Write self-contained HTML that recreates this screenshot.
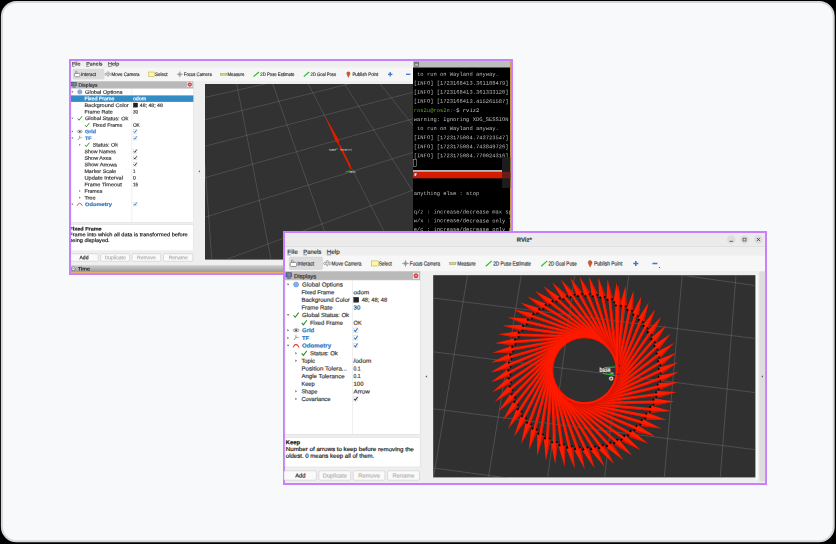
<!DOCTYPE html>
<html><head><meta charset="utf-8"><title>RViz</title>
<style>
html,body{margin:0;padding:0;background:#000;overflow:hidden}
svg{display:block}
text{font-family:"Liberation Sans",sans-serif;white-space:pre}
.m{font-family:"Liberation Mono",monospace}
.b{font-weight:bold}
</style></head><body>
<svg width="836" height="544" viewBox="0 0 836 544">
<rect x="0" y="0" width="836" height="544" fill="#000"/>
<rect x="1.9" y="1.9" width="831.8" height="539.4" rx="14.5" ry="14.5" fill="#f8f9fb" stroke="#d4d7da" stroke-width="2"/>
<g id="w1">
<rect x="69.00" y="59.00" width="444.00" height="216.00" fill="#c880ff" />
<rect x="71.00" y="61.00" width="440.00" height="212.00" fill="#efefef" />
<clipPath id="c1"><rect x="71" y="61" width="440" height="212"/></clipPath>
<filter id="b1" x="0" y="0" width="100%" height="100%"><feGaussianBlur stdDeviation="0.35"/></filter>
<g clip-path="url(#c1)"><g filter="url(#b1)">
<rect x="71.00" y="67.50" width="342.00" height="13.50" fill="#f6f6f6" />
<rect x="72.60" y="68.80" width="31.80" height="10.70" fill="#dcdcdc" rx="1.2"/>
<rect x="71.00" y="81.30" width="122.40" height="7.40" fill="#b9b9b9" />
<rect x="71.00" y="88.70" width="122.40" height="133.50" fill="#ffffff" stroke="#d6d6d6" stroke-width="0.4"/>
<line x1="131.80" y1="88.70" x2="131.80" y2="222.20" stroke="#e4e4e4" stroke-width="0.6" />
<rect x="71.00" y="95.40" width="122.40" height="6.50" fill="#308cc6" />
<rect x="71.00" y="224.80" width="122.40" height="26.10" fill="#ffffff" stroke="#d6d6d6" stroke-width="0.4"/>
<rect x="70.00" y="253.70" width="28.20" height="7.60" fill="#fafafa" rx="1" stroke="#c9c9c9" stroke-width="0.6"/>
<rect x="100.70" y="253.70" width="28.90" height="7.60" fill="#fafafa" rx="1" stroke="#c9c9c9" stroke-width="0.6"/>
<rect x="132.10" y="253.70" width="28.70" height="7.60" fill="#fafafa" rx="1" stroke="#c9c9c9" stroke-width="0.6"/>
<rect x="163.50" y="253.70" width="29.30" height="7.60" fill="#fafafa" rx="1" stroke="#c9c9c9" stroke-width="0.6"/>
<linearGradient id="tg" x1="0" y1="0" x2="0" y2="1"><stop offset="0" stop-color="#cfcfcf"/><stop offset="1" stop-color="#979797"/></linearGradient>
<rect x="71.00" y="265.20" width="440.00" height="7.00" fill="url(#tg)" />
<rect x="71.00" y="271.70" width="440.00" height="1.00" fill="#e8a33a" />
<rect x="205.00" y="84.00" width="208.00" height="175.60" fill="#303030" />
<rect x="413.00" y="61.00" width="97.50" height="212.00" fill="#000000" />
<rect x="413.00" y="61.00" width="97.50" height="6.50" fill="#bdbdbd" />
<rect x="510.30" y="61.00" width="0.80" height="212.00" fill="#e8a33a" />
<rect x="414.8" y="62.2" width="3.6" height="4" fill="none" stroke="#444" stroke-width="0.6"/>
<line x1="414.80" y1="63.30" x2="418.40" y2="63.30" stroke="#444" stroke-width="0.6" />
<text x="413.80" y="75.63" font-size="5.45" fill="#bdbdbd" textLength="85.02" lengthAdjust="spacingAndGlyphs" class="m" transform="rotate(0.05 413.8 75.6)" > to run on Wayland anyway.</text>
<text x="413.80" y="84.70" font-size="5.45" fill="#bdbdbd" textLength="94.83" lengthAdjust="spacingAndGlyphs" class="m" transform="rotate(0.05 413.8 84.7)" >[INFO] [1723168413.361188479]</text>
<text x="413.80" y="93.77" font-size="5.45" fill="#bdbdbd" textLength="94.83" lengthAdjust="spacingAndGlyphs" class="m" transform="rotate(0.05 413.8 93.8)" >[INFO] [1723168413.361333120]</text>
<text x="413.80" y="102.84" font-size="5.45" fill="#bdbdbd" textLength="94.83" lengthAdjust="spacingAndGlyphs" class="m" transform="rotate(0.05 413.8 102.8)" >[INFO] [1723168413.415261587]</text>
<text x="413.80" y="111.91" font-size="5.45" fill="#5fa81e" textLength="35.97" lengthAdjust="spacingAndGlyphs" class="m" transform="rotate(0.05 413.8 111.9)" >ros2u@ros2n</text>
<text x="449.77" y="111.91" font-size="5.45" fill="#3d6fb5" textLength="6.54" lengthAdjust="spacingAndGlyphs" class="m" transform="rotate(0.05 449.8 111.9)" >:~</text>
<text x="456.31" y="111.91" font-size="5.45" fill="#d0d0d0" textLength="22.89" lengthAdjust="spacingAndGlyphs" class="m" transform="rotate(0.05 456.3 111.9)" >$ rviz2</text>
<text x="413.80" y="120.98" font-size="5.45" fill="#bdbdbd" textLength="94.83" lengthAdjust="spacingAndGlyphs" class="m" transform="rotate(0.05 413.8 121.0)" >warning: Ignoring XDG_SESSION</text>
<text x="413.80" y="130.05" font-size="5.45" fill="#bdbdbd" textLength="85.02" lengthAdjust="spacingAndGlyphs" class="m" transform="rotate(0.05 413.8 130.1)" > to run on Wayland anyway.</text>
<text x="413.80" y="139.12" font-size="5.45" fill="#bdbdbd" textLength="94.83" lengthAdjust="spacingAndGlyphs" class="m" transform="rotate(0.05 413.8 139.1)" >[INFO] [1723175084.743723547]</text>
<text x="413.80" y="148.19" font-size="5.45" fill="#bdbdbd" textLength="94.83" lengthAdjust="spacingAndGlyphs" class="m" transform="rotate(0.05 413.8 148.2)" >[INFO] [1723175084.743849726]</text>
<text x="413.80" y="157.26" font-size="5.45" fill="#bdbdbd" textLength="94.83" lengthAdjust="spacingAndGlyphs" class="m" transform="rotate(0.05 413.8 157.3)" >[INFO] [1723175084.770024316]</text>
<rect x="413.6" y="159.5" width="3" height="7" fill="none" stroke="#bbb" stroke-width="0.5"/>
<rect x="502.00" y="157.00" width="8.30" height="31.00" fill="#1f1f1f" />
<rect x="413.00" y="170.20" width="89.00" height="1.60" fill="#e6e6e6" />
<rect x="413.00" y="171.80" width="89.00" height="6.50" fill="#d61a00" />
<rect x="502.00" y="171.80" width="8.30" height="6.50" fill="#6a1c16" />
<rect x="414.50" y="173.30" width="2.20" height="2.60" fill="#e8e8f8" />
<rect x="416.00" y="174.60" width="1.60" height="1.80" fill="#3355cc" />
<text x="413.80" y="195.03" font-size="5.45" fill="#bdbdbd" textLength="65.40" lengthAdjust="spacingAndGlyphs" class="m" transform="rotate(0.05 413.8 195.0)" >anything else : stop</text>
<text x="413.80" y="213.43" font-size="5.45" fill="#bdbdbd" textLength="98.10" lengthAdjust="spacingAndGlyphs" class="m" transform="rotate(0.05 413.8 213.4)" >q/z : increase/decrease max sp</text>
<text x="413.80" y="222.33" font-size="5.45" fill="#bdbdbd" textLength="98.10" lengthAdjust="spacingAndGlyphs" class="m" transform="rotate(0.05 413.8 222.3)" >w/x : increase/decrease only l</text>
<text x="413.80" y="230.93" font-size="5.45" fill="#bdbdbd" textLength="98.10" lengthAdjust="spacingAndGlyphs" class="m" transform="rotate(0.05 413.8 230.9)" >e/c : increase/decrease only a</text>
<clipPath id="v1"><rect x="205" y="84" width="208" height="175.6"/></clipPath>
<g clip-path="url(#v1)" stroke="#787878" stroke-width="0.42" fill="none">
<line x1="196.1" y1="99.4" x2="273.4" y2="82.1"/>
<line x1="183.4" y1="125.1" x2="370.6" y2="78.6"/>
<line x1="173.9" y1="154.3" x2="443.6" y2="84.3"/>
<line x1="174.2" y1="186.4" x2="443.6" y2="110.1"/>
<line x1="174.2" y1="226.8" x2="443.7" y2="142.9"/>
<line x1="198.4" y1="269.9" x2="440.5" y2="179.9"/>
<line x1="204.9" y1="163.9" x2="212.7" y2="271.6"/>
<line x1="231.6" y1="57.8" x2="276.1" y2="285.5"/>
<line x1="265.2" y1="62.4" x2="331.3" y2="250.7"/>
<line x1="297.0" y1="62.0" x2="395.6" y2="253.7"/>
<line x1="334.5" y1="68.1" x2="422.8" y2="207.0"/>
<line x1="375.5" y1="78.0" x2="417.3" y2="130.8"/>
</g>
<path d="M324.8,115.6 L339.3,140.8 L338.55,141.2 L352.15,168.4 L350.45,169.2 L336.85,142.0 L336.1,142.4 Z" fill="#dc1e00"/>
<line x1="339.60" y1="143.00" x2="340.20" y2="146.00" stroke="#1a1ad0" stroke-width="0.9" />
<line x1="351.30" y1="165.20" x2="351.80" y2="168.20" stroke="#1a1ad0" stroke-width="0.9" />
<line x1="332.00" y1="150.00" x2="338.00" y2="148.80" stroke="#19c019" stroke-width="0.9" />
<line x1="345.50" y1="172.00" x2="350.50" y2="170.60" stroke="#19c019" stroke-width="0.9" />
<text x="329.30" y="150.52" font-size="2.6" fill="#ffffff" textLength="6.50" lengthAdjust="spacingAndGlyphs" transform="rotate(0.05 329.3 150.5)" >base_f</text>
<text x="340.50" y="150.52" font-size="2.6" fill="#e8e8e8" textLength="11.00" lengthAdjust="spacingAndGlyphs" transform="rotate(0.05 340.5 150.5)" >footprint</text>
<text x="349.50" y="172.72" font-size="2.6" fill="#ffffff" textLength="6.00" lengthAdjust="spacingAndGlyphs" transform="rotate(0.05 349.5 172.7)" >odom</text>
<text x="71.90" y="65.49" font-size="5.05" fill="#3a3a3a" textLength="8.60" lengthAdjust="spacingAndGlyphs" stroke="#3a3a3a" stroke-width="0.18" transform="rotate(0.05 71.9 65.5)" >File</text>
<line x1="71.90" y1="66.40" x2="74.60" y2="66.40" stroke="#3a3a3a" stroke-width="0.5" />
<text x="86.20" y="65.49" font-size="5.05" fill="#3a3a3a" textLength="16.30" lengthAdjust="spacingAndGlyphs" stroke="#3a3a3a" stroke-width="0.18" transform="rotate(0.05 86.2 65.5)" >Panels</text>
<line x1="86.20" y1="66.40" x2="89.30" y2="66.40" stroke="#3a3a3a" stroke-width="0.5" />
<text x="108.00" y="65.49" font-size="5.05" fill="#3a3a3a" textLength="11.20" lengthAdjust="spacingAndGlyphs" stroke="#3a3a3a" stroke-width="0.18" transform="rotate(0.05 108.0 65.5)" >Help</text>
<line x1="108.00" y1="66.40" x2="111.60" y2="66.40" stroke="#3a3a3a" stroke-width="0.5" />
<text x="81.00" y="76.09" font-size="5.05" fill="#3a3a3a" textLength="15.00" lengthAdjust="spacingAndGlyphs" stroke="#3a3a3a" stroke-width="0.18" transform="rotate(0.05 81.0 76.1)" >Interact</text>
<text x="111.60" y="76.09" font-size="5.05" fill="#3a3a3a" textLength="28.00" lengthAdjust="spacingAndGlyphs" stroke="#3a3a3a" stroke-width="0.18" transform="rotate(0.05 111.6 76.1)" >Move Camera</text>
<text x="154.90" y="76.09" font-size="5.05" fill="#3a3a3a" textLength="12.70" lengthAdjust="spacingAndGlyphs" stroke="#3a3a3a" stroke-width="0.18" transform="rotate(0.05 154.9 76.1)" >Select</text>
<text x="183.80" y="76.09" font-size="5.05" fill="#3a3a3a" textLength="28.00" lengthAdjust="spacingAndGlyphs" stroke="#3a3a3a" stroke-width="0.18" transform="rotate(0.05 183.8 76.1)" >Focus Camera</text>
<text x="227.40" y="76.09" font-size="5.05" fill="#3a3a3a" textLength="17.00" lengthAdjust="spacingAndGlyphs" stroke="#3a3a3a" stroke-width="0.18" transform="rotate(0.05 227.4 76.1)" >Measure</text>
<text x="260.30" y="76.09" font-size="5.05" fill="#3a3a3a" textLength="34.20" lengthAdjust="spacingAndGlyphs" stroke="#3a3a3a" stroke-width="0.18" transform="rotate(0.05 260.3 76.1)" >2D Pose Estimate</text>
<text x="310.60" y="76.09" font-size="5.05" fill="#3a3a3a" textLength="25.60" lengthAdjust="spacingAndGlyphs" stroke="#3a3a3a" stroke-width="0.18" transform="rotate(0.05 310.6 76.1)" >2D Goal Pose</text>
<text x="352.40" y="76.09" font-size="5.05" fill="#3a3a3a" textLength="25.90" lengthAdjust="spacingAndGlyphs" stroke="#3a3a3a" stroke-width="0.18" transform="rotate(0.05 352.4 76.1)" >Publish Point</text>
<rect x="75.6" y="71.3" width="1.3" height="3" rx="0.5" fill="#fdfdfd" stroke="#444" stroke-width="0.45"/>
<rect x="74.5" y="73.4" width="5.4" height="3.3" rx="1" fill="#fdfdfd" stroke="#444" stroke-width="0.5"/>
<path d="M108,71.3 l1.3,1.5 h-0.8 v1.1 h1.6 v-0.8 l1.4,1.2 l-1.4,1.2 v-0.8 h-1.6 v1.6 h-1 v-1.6 h-1.6 v0.8 l-1.4,-1.2 l1.4,-1.2 v0.8 h1.6 v-1.1 h-0.8 z" fill="#f2f2f2" stroke="#666" stroke-width="0.4"/>
<rect x="148.70" y="72.00" width="5.90" height="4.40" fill="#fdf6a5" stroke="#b3a53a" stroke-width="0.45"/>
<circle cx="179.8" cy="74.3" r="1.5" fill="#d8d8d8" stroke="#777" stroke-width="0.4"/>
<line x1="176.80" y1="74.30" x2="182.80" y2="74.30" stroke="#777" stroke-width="0.5" />
<line x1="179.80" y1="71.30" x2="179.80" y2="77.30" stroke="#777" stroke-width="0.5" />
<rect x="220.20" y="73.40" width="6.70" height="1.90" fill="#d9cf86" stroke="#8f8a4d" stroke-width="0.35"/>
<line x1="253.60" y1="76.60" x2="258.90" y2="72.00" stroke="#25b525" stroke-width="1.1" />
<line x1="303.80" y1="76.60" x2="309.10" y2="72.00" stroke="#25b525" stroke-width="1.1" />
<path d="M348.4,77.4 l-1.5,-3.2 a1.7,1.7 0 1 1 3,0 z" fill="#d4552a" stroke="#8a2f14" stroke-width="0.3"/>
<line x1="388.00" y1="74.30" x2="392.40" y2="74.30" stroke="#3f76c8" stroke-width="1.3" />
<line x1="390.20" y1="72.10" x2="390.20" y2="76.50" stroke="#3f76c8" stroke-width="1.3" />
<line x1="406.00" y1="74.30" x2="410.40" y2="74.30" stroke="#3f76c8" stroke-width="1.3" />
<text x="78.60" y="86.79" font-size="5.05" fill="#333" textLength="19.00" lengthAdjust="spacingAndGlyphs" stroke="#333" stroke-width="0.18" transform="rotate(0.05 78.6 86.8)" >Displays</text>
<rect x="71.60" y="82.30" width="4.80" height="3.60" fill="#5a7dd6" stroke="#333" stroke-width="0.4"/>
<rect x="72.60" y="82.90" width="1.30" height="2.40" fill="#d24a4a" />
<rect x="73.90" y="82.90" width="1.20" height="2.40" fill="#58b558" />
<line x1="72.60" y1="87.00" x2="75.60" y2="87.00" stroke="#333" stroke-width="0.6" />
<rect x="187.30" y="82.00" width="5.00" height="5.00" fill="#f4f4f4" />
<circle cx="189.8" cy="84.5" r="1.9" fill="#e23b3b" stroke="#b02020" stroke-width="0.3"/>
<line x1="188.90" y1="84.50" x2="190.70" y2="84.50" stroke="#fff" stroke-width="0.6" />
<path d="M71.30,91.30 h2.20 l-1.10,1.40 z" fill="#666"/>
<circle cx="79.80" cy="91.90" r="2.20" fill="#7aa6ea" stroke="#5a86cc" stroke-width="0.40"/>
<ellipse cx="79.80" cy="91.90" rx="0.90" ry="2.20" fill="none" stroke="#b8d0f4" stroke-width="0.30"/>
<text x="85.00" y="93.69" font-size="5.05" fill="#3a3a3a" textLength="37.50" lengthAdjust="spacingAndGlyphs" stroke="#3a3a3a" stroke-width="0.18" transform="rotate(0.05 85.0 93.7)" >Global Options</text>
<text x="84.40" y="100.30" font-size="5.05" fill="#ffffff" textLength="30.20" lengthAdjust="spacingAndGlyphs" stroke="#ffffff" stroke-width="0.18" transform="rotate(0.05 84.4 100.3)" >Fixed Frame</text>
<text x="132.90" y="100.30" font-size="5.05" fill="#ffffff" textLength="13.30" lengthAdjust="spacingAndGlyphs" stroke="#ffffff" stroke-width="0.18" transform="rotate(0.05 132.9 100.3)" >odom</text>
<text x="84.40" y="106.90" font-size="5.05" fill="#3a3a3a" textLength="44.30" lengthAdjust="spacingAndGlyphs" stroke="#3a3a3a" stroke-width="0.18" transform="rotate(0.05 84.4 106.9)" >Background Color</text>
<rect x="133.30" y="103.01" width="4.40" height="4.20" fill="#222" stroke="#111" stroke-width="0.3"/>
<text x="139.80" y="106.90" font-size="5.05" fill="#3a3a3a" textLength="23.10" lengthAdjust="spacingAndGlyphs" stroke="#3a3a3a" stroke-width="0.18" transform="rotate(0.05 139.8 106.9)" >48; 48; 48</text>
<text x="84.40" y="113.51" font-size="5.05" fill="#3a3a3a" textLength="28.40" lengthAdjust="spacingAndGlyphs" stroke="#3a3a3a" stroke-width="0.18" transform="rotate(0.05 84.4 113.5)" >Frame Rate</text>
<text x="132.90" y="113.51" font-size="5.05" fill="#3a3a3a" textLength="5.20" lengthAdjust="spacingAndGlyphs" stroke="#3a3a3a" stroke-width="0.18" transform="rotate(0.05 132.9 113.5)" >30</text>
<path d="M71.30,117.72 h2.20 l-1.10,1.40 z" fill="#666"/>
<path d="M77.60,118.52 l1.40,1.70 l3.00,-4.00" fill="none" stroke="#1f8f1f" stroke-width="0.90"/>
<text x="85.00" y="120.12" font-size="5.05" fill="#3a3a3a" textLength="43.20" lengthAdjust="spacingAndGlyphs" stroke="#3a3a3a" stroke-width="0.18" transform="rotate(0.05 85.0 120.1)" >Global Status: Ok</text>
<path d="M85.00,125.13 l1.40,1.70 l3.00,-4.00" fill="none" stroke="#1f8f1f" stroke-width="0.90"/>
<text x="92.70" y="126.72" font-size="5.05" fill="#3a3a3a" textLength="29.80" lengthAdjust="spacingAndGlyphs" stroke="#3a3a3a" stroke-width="0.18" transform="rotate(0.05 92.7 126.7)" >Fixed Frame</text>
<text x="132.90" y="126.72" font-size="5.05" fill="#3a3a3a" textLength="6.90" lengthAdjust="spacingAndGlyphs" stroke="#3a3a3a" stroke-width="0.18" transform="rotate(0.05 132.9 126.7)" >OK</text>
<path d="M71.80,130.44 v2.20 l1.40,-1.10 z" fill="#666"/>
<ellipse cx="79.80" cy="131.54" rx="2.50" ry="1.40" fill="#e8e8e8" stroke="#555" stroke-width="0.45"/>
<circle cx="79.80" cy="131.54" r="0.90" fill="#444"/>
<text x="85.00" y="133.33" font-size="5.05" fill="#2d78c4" textLength="11.00" lengthAdjust="spacingAndGlyphs" font-weight="bold" stroke="#2d78c4" stroke-width="0.18" transform="rotate(0.05 85.0 133.3)" >Grid</text>
<rect x="133.30" y="129.64" width="3.70" height="3.70" fill="#ffffff" stroke="#d2d6dc" stroke-width="0.50"/>
<path d="M133.90,131.44 l0.90,1.20 l1.90,-2.80" fill="none" stroke="#2f70c4" stroke-width="0.90"/>
<path d="M71.30,137.54 h2.20 l-1.10,1.40 z" fill="#666"/>
<line x1="78.00" y1="139.94" x2="79.60" y2="137.94" stroke="#3a58c8" stroke-width="0.6" />
<line x1="79.60" y1="137.94" x2="79.60" y2="135.74" stroke="#c83a3a" stroke-width="0.6" />
<line x1="79.60" y1="137.94" x2="82.00" y2="137.54" stroke="#3aa83a" stroke-width="0.6" />
<text x="85.00" y="139.93" font-size="5.05" fill="#2d78c4" textLength="6.70" lengthAdjust="spacingAndGlyphs" font-weight="bold" stroke="#2d78c4" stroke-width="0.18" transform="rotate(0.05 85.0 139.9)" >TF</text>
<rect x="133.30" y="136.24" width="3.70" height="3.70" fill="#ffffff" stroke="#d2d6dc" stroke-width="0.50"/>
<path d="M133.90,138.04 l0.90,1.20 l1.90,-2.80" fill="none" stroke="#2f70c4" stroke-width="0.90"/>
<path d="M79.20,143.65 v2.20 l1.40,-1.10 z" fill="#666"/>
<path d="M85.00,144.95 l1.40,1.70 l3.00,-4.00" fill="none" stroke="#1f8f1f" stroke-width="0.90"/>
<text x="92.70" y="146.54" font-size="5.05" fill="#3a3a3a" textLength="25.20" lengthAdjust="spacingAndGlyphs" stroke="#3a3a3a" stroke-width="0.18" transform="rotate(0.05 92.7 146.5)" >Status: Ok</text>
<text x="84.40" y="153.15" font-size="5.05" fill="#3a3a3a" textLength="31.40" lengthAdjust="spacingAndGlyphs" stroke="#3a3a3a" stroke-width="0.18" transform="rotate(0.05 84.4 153.1)" >Show Names</text>
<rect x="133.30" y="149.45" width="3.70" height="3.70" fill="#ffffff" stroke="#d2d6dc" stroke-width="0.50"/>
<path d="M133.90,151.25 l0.90,1.20 l1.90,-2.80" fill="none" stroke="#2a2a2a" stroke-width="0.90"/>
<text x="84.40" y="159.75" font-size="5.05" fill="#3a3a3a" textLength="27.10" lengthAdjust="spacingAndGlyphs" stroke="#3a3a3a" stroke-width="0.18" transform="rotate(0.05 84.4 159.8)" >Show Axes</text>
<rect x="133.30" y="156.06" width="3.70" height="3.70" fill="#ffffff" stroke="#d2d6dc" stroke-width="0.50"/>
<path d="M133.90,157.86 l0.90,1.20 l1.90,-2.80" fill="none" stroke="#2a2a2a" stroke-width="0.90"/>
<text x="84.40" y="166.36" font-size="5.05" fill="#3a3a3a" textLength="32.70" lengthAdjust="spacingAndGlyphs" stroke="#3a3a3a" stroke-width="0.18" transform="rotate(0.05 84.4 166.4)" >Show Arrows</text>
<rect x="133.30" y="162.67" width="3.70" height="3.70" fill="#ffffff" stroke="#d2d6dc" stroke-width="0.50"/>
<path d="M133.90,164.47 l0.90,1.20 l1.90,-2.80" fill="none" stroke="#2a2a2a" stroke-width="0.90"/>
<text x="84.40" y="172.96" font-size="5.05" fill="#3a3a3a" textLength="31.70" lengthAdjust="spacingAndGlyphs" stroke="#3a3a3a" stroke-width="0.18" transform="rotate(0.05 84.4 173.0)" >Marker Scale</text>
<text x="132.90" y="172.96" font-size="5.05" fill="#3a3a3a" textLength="2.40" lengthAdjust="spacingAndGlyphs" stroke="#3a3a3a" stroke-width="0.18" transform="rotate(0.05 132.9 173.0)" >1</text>
<text x="84.40" y="179.57" font-size="5.05" fill="#3a3a3a" textLength="38.60" lengthAdjust="spacingAndGlyphs" stroke="#3a3a3a" stroke-width="0.18" transform="rotate(0.05 84.4 179.6)" >Update Interval</text>
<text x="132.90" y="179.57" font-size="5.05" fill="#3a3a3a" textLength="2.80" lengthAdjust="spacingAndGlyphs" stroke="#3a3a3a" stroke-width="0.18" transform="rotate(0.05 132.9 179.6)" >0</text>
<text x="84.40" y="186.18" font-size="5.05" fill="#3a3a3a" textLength="37.40" lengthAdjust="spacingAndGlyphs" stroke="#3a3a3a" stroke-width="0.18" transform="rotate(0.05 84.4 186.2)" >Frame Timeout</text>
<text x="132.90" y="186.18" font-size="5.05" fill="#3a3a3a" textLength="5.20" lengthAdjust="spacingAndGlyphs" stroke="#3a3a3a" stroke-width="0.18" transform="rotate(0.05 132.9 186.2)" >15</text>
<path d="M79.20,189.89 v2.20 l1.40,-1.10 z" fill="#666"/>
<text x="84.40" y="192.78" font-size="5.05" fill="#3a3a3a" textLength="18.00" lengthAdjust="spacingAndGlyphs" stroke="#3a3a3a" stroke-width="0.18" transform="rotate(0.05 84.4 192.8)" >Frames</text>
<path d="M79.20,196.50 v2.20 l1.40,-1.10 z" fill="#666"/>
<text x="84.40" y="199.39" font-size="5.05" fill="#3a3a3a" textLength="11.10" lengthAdjust="spacingAndGlyphs" stroke="#3a3a3a" stroke-width="0.18" transform="rotate(0.05 84.4 199.4)" >Tree</text>
<path d="M71.80,203.10 v2.20 l1.40,-1.10 z" fill="#666"/>
<path d="M77.20,205.80 q2.40,-5.20 5.20,0" fill="none" stroke="#d8452a" stroke-width="0.90"/>
<text x="85.00" y="205.99" font-size="5.05" fill="#2d78c4" textLength="27.00" lengthAdjust="spacingAndGlyphs" font-weight="bold" stroke="#2d78c4" stroke-width="0.18" transform="rotate(0.05 85.0 206.0)" >Odometry</text>
<rect x="133.30" y="202.30" width="3.70" height="3.70" fill="#ffffff" stroke="#d2d6dc" stroke-width="0.50"/>
<path d="M133.90,204.10 l0.90,1.20 l1.90,-2.80" fill="none" stroke="#2f70c4" stroke-width="0.90"/>
<text x="69.40" y="230.49" font-size="5.05" fill="#111" textLength="32.20" lengthAdjust="spacingAndGlyphs" font-weight="bold" stroke="#111" stroke-width="0.18" transform="rotate(0.05 69.4 230.5)" >Fixed Frame</text>
<text x="69.20" y="236.19" font-size="5.05" fill="#222" textLength="118.60" lengthAdjust="spacingAndGlyphs" stroke="#222" stroke-width="0.18" transform="rotate(0.05 69.2 236.2)" >Frame into which all data is transformed before</text>
<text x="69.20" y="242.09" font-size="5.05" fill="#222" textLength="40.50" lengthAdjust="spacingAndGlyphs" stroke="#222" stroke-width="0.18" transform="rotate(0.05 69.2 242.1)" >being displayed.</text>
<text x="84.00" y="259.29" font-size="5.05" fill="#222" text-anchor="middle" stroke="#222" stroke-width="0.18" transform="rotate(0.05 84.0 259.3)" >Add</text>
<text x="115.20" y="259.29" font-size="5.05" fill="#b4b4b4" text-anchor="middle" stroke="#b4b4b4" stroke-width="0.18" transform="rotate(0.05 115.2 259.3)" >Duplicate</text>
<text x="146.50" y="259.29" font-size="5.05" fill="#b4b4b4" text-anchor="middle" stroke="#b4b4b4" stroke-width="0.18" transform="rotate(0.05 146.5 259.3)" >Remove</text>
<text x="178.20" y="259.29" font-size="5.05" fill="#b4b4b4" text-anchor="middle" stroke="#b4b4b4" stroke-width="0.18" transform="rotate(0.05 178.2 259.3)" >Rename</text>
<circle cx="73.3" cy="268.7" r="1.9" fill="#f4f4f4" stroke="#444" stroke-width="0.5"/>
<line x1="72.30" y1="268.70" x2="74.30" y2="268.70" stroke="#444" stroke-width="0.5" />
<text x="77.80" y="270.49" font-size="5.05" fill="#222" textLength="12.20" lengthAdjust="spacingAndGlyphs" stroke="#222" stroke-width="0.18" transform="rotate(0.05 77.8 270.5)" >Time</text>
<path d="M199.80,170.30 v2.20 l-1.40,-1.10 z" fill="#555"/>
</g></g>
</g>
<g id="w2">
<rect x="283.00" y="231.00" width="484.00" height="254.00" fill="#c880ff" />
<rect x="285.00" y="233.00" width="480.00" height="250.00" fill="#efefef" />
<rect x="285.00" y="233.00" width="480.00" height="13.20" fill="#ebebeb" />
<line x1="285.00" y1="246.50" x2="765.00" y2="246.50" stroke="#dcdcdc" stroke-width="0.8" />
<rect x="285.00" y="255.60" width="480.00" height="15.50" fill="#f7f7f7" />
<rect x="289.20" y="257.00" width="33.40" height="12.40" fill="#dddddd" rx="1.5" stroke="#cfcfcf" stroke-width="0.5"/>
<circle cx="731.3" cy="239.5" r="4.3" fill="#dedede"/>
<circle cx="744.6" cy="239.5" r="4.3" fill="#dedede"/>
<circle cx="758.4" cy="239.5" r="4.3" fill="#dedede"/>
<rect x="285.00" y="271.30" width="135.20" height="8.80" fill="#b9b9b9" />
<rect x="285.00" y="280.10" width="135.20" height="154.30" fill="#ffffff" stroke="#d4d4d4" stroke-width="0.5"/>
<line x1="352.50" y1="280.10" x2="352.50" y2="434.40" stroke="#e4e4e4" stroke-width="0.6" />
<rect x="285.00" y="437.20" width="135.20" height="29.80" fill="#ffffff" stroke="#d4d4d4" stroke-width="0.5"/>
<rect x="284.00" y="470.80" width="32.40" height="9.40" fill="#fafafa" rx="1.2" stroke="#c9c9c9" stroke-width="0.6"/>
<rect x="318.90" y="470.80" width="31.70" height="9.40" fill="#fafafa" rx="1.2" stroke="#c9c9c9" stroke-width="0.6"/>
<rect x="353.20" y="470.80" width="31.70" height="9.40" fill="#fafafa" rx="1.2" stroke="#c9c9c9" stroke-width="0.6"/>
<rect x="387.50" y="470.80" width="32.00" height="9.40" fill="#fafafa" rx="1.2" stroke="#c9c9c9" stroke-width="0.6"/>
<rect x="755.40" y="275.00" width="2.20" height="204.50" fill="#fcfcfc" />
<rect x="759.30" y="271.40" width="5.80" height="210.20" fill="#dddddd" />
<rect x="433.20" y="275.20" width="322.20" height="202.20" fill="#303030" />
<clipPath id="v2"><rect x="433.2" y="275.2" width="322.2" height="202.2"/></clipPath>
<g clip-path="url(#v2)">
<g stroke="#747474" stroke-width="0.45" fill="none">
<line x1="672.9" y1="273.9" x2="762.9" y2="286.6"/>
<line x1="401.0" y1="293.9" x2="787.6" y2="342.6"/>
<line x1="401.0" y1="347.7" x2="787.6" y2="396.7"/>
<line x1="401.0" y1="404.7" x2="787.6" y2="453.8"/>
<line x1="426.3" y1="467.1" x2="508.9" y2="478.1"/>
<line x1="471.0" y1="254.8" x2="430.1" y2="497.4"/>
<line x1="524.6" y1="254.8" x2="485.2" y2="497.4"/>
<line x1="577.3" y1="254.8" x2="545.0" y2="497.4"/>
<line x1="631.2" y1="254.8" x2="602.2" y2="497.4"/>
<line x1="684.0" y1="254.8" x2="662.5" y2="497.4"/>
<line x1="737.6" y1="254.8" x2="718.7" y2="497.4"/>
</g>
<ellipse cx="609.7" cy="299.3" rx="1.3" ry="3.4" transform="rotate(-95.6 609.7 299.3)" fill="#100200"/>
<polygon points="615.5,366.7 608.2,298.0 610.9,297.8 618.3,366.4" fill="#ff1a00"/>
<polygon points="617.6,366.5 610.3,298.3 610.9,298.3 618.3,366.4" fill="#d01400"/>
<polygon points="606.4,298.7 607.6,279.6 612.8,298.1" fill="#ff1d00"/>
<polygon points="611.0,298.2 607.6,279.6 612.8,298.1" fill="#cc1400"/>
<ellipse cx="602.5" cy="297.0" rx="1.3" ry="3.4" transform="rotate(-101.5 602.5 297.0)" fill="#100200"/>
<polygon points="615.0,363.4 600.9,296.0 603.5,295.4 617.7,362.9" fill="#ff1a00"/>
<polygon points="617.0,363.0 602.9,296.1 603.6,295.9 617.7,362.9" fill="#d01400"/>
<polygon points="599.1,296.8 598.4,277.7 605.4,295.5" fill="#ff1d00"/>
<polygon points="603.7,295.9 598.4,277.7 605.4,295.5" fill="#cc1400"/>
<ellipse cx="595.0" cy="295.6" rx="1.3" ry="3.4" transform="rotate(-107.4 595.0 295.6)" fill="#100200"/>
<polygon points="614.2,360.3 593.3,294.7 595.9,293.9 616.8,359.4" fill="#ff1a00"/>
<polygon points="616.2,359.6 595.4,294.5 596.0,294.3 616.8,359.4" fill="#d01400"/>
<polygon points="591.7,295.7 589.0,276.8 597.8,293.8" fill="#ff1d00"/>
<polygon points="596.1,294.3 589.0,276.8 597.8,293.8" fill="#cc1400"/>
<ellipse cx="587.5" cy="294.9" rx="1.3" ry="3.4" transform="rotate(-113.3 587.5 294.9)" fill="#100200"/>
<polygon points="613.1,357.2 585.7,294.2 588.2,293.1 615.6,356.1" fill="#ff1a00"/>
<polygon points="614.9,356.4 587.8,293.8 588.4,293.6 615.6,356.1" fill="#d01400"/>
<polygon points="584.2,295.4 579.7,276.8 590.1,292.8" fill="#ff1d00"/>
<polygon points="588.5,293.5 579.7,276.8 590.1,292.8" fill="#cc1400"/>
<ellipse cx="580.0" cy="295.0" rx="1.3" ry="3.4" transform="rotate(-119.2 580.0 295.0)" fill="#100200"/>
<polygon points="611.6,354.3 578.1,294.4 580.5,293.1 614.0,352.9" fill="#ff1a00"/>
<polygon points="613.4,353.3 580.1,293.9 580.7,293.5 614.0,352.9" fill="#d01400"/>
<polygon points="576.7,295.8 570.3,277.8 582.3,292.6" fill="#ff1d00"/>
<polygon points="580.8,293.5 570.3,277.8 582.3,292.6" fill="#cc1400"/>
<ellipse cx="572.4" cy="295.8" rx="1.3" ry="3.4" transform="rotate(-125.1 572.4 295.8)" fill="#100200"/>
<polygon points="609.9,351.5 570.6,295.5 572.8,293.9 612.1,349.9" fill="#ff1a00"/>
<polygon points="611.6,350.3 572.5,294.7 573.0,294.3 612.1,349.9" fill="#d01400"/>
<polygon points="569.3,296.9 561.1,279.7 574.6,293.3" fill="#ff1d00"/>
<polygon points="573.1,294.3 561.1,279.7 574.6,293.3" fill="#cc1400"/>
<ellipse cx="565.1" cy="297.4" rx="1.3" ry="3.4" transform="rotate(-131.0 565.1 297.4)" fill="#100200"/>
<polygon points="607.9,349.0 563.1,297.3 565.2,295.5 609.9,347.2" fill="#ff1a00"/>
<polygon points="609.4,347.6 565.0,296.3 565.5,295.9 609.9,347.2" fill="#d01400"/>
<polygon points="562.0,298.9 552.2,282.5 566.9,294.7" fill="#ff1d00"/>
<polygon points="565.6,295.8 552.2,282.5 566.9,294.7" fill="#cc1400"/>
<ellipse cx="557.9" cy="299.8" rx="1.3" ry="3.4" transform="rotate(-136.9 557.9 299.8)" fill="#100200"/>
<polygon points="605.7,346.7 555.9,299.9 557.8,297.9 607.5,344.6" fill="#ff1a00"/>
<polygon points="606.1,346.2 556.8,299.7 556.3,300.2 605.7,346.7" fill="#d01400"/>
<polygon points="555.0,301.6 543.5,286.3 559.4,296.9" fill="#ff1d00"/>
<polygon points="556.2,300.3 543.5,286.3 555.0,301.6" fill="#cc1400"/>
<ellipse cx="550.9" cy="302.9" rx="1.3" ry="3.4" transform="rotate(-142.8 550.9 302.9)" fill="#100200"/>
<polygon points="603.2,344.6 549.0,303.2 550.7,301.0 604.8,342.4" fill="#ff1a00"/>
<polygon points="603.6,344.0 549.8,302.9 549.4,303.4 603.2,344.6" fill="#d01400"/>
<polygon points="548.2,304.9 535.2,290.9 552.2,299.8" fill="#ff1d00"/>
<polygon points="549.3,303.5 535.2,290.9 548.2,304.9" fill="#cc1400"/>
<ellipse cx="544.3" cy="306.7" rx="1.3" ry="3.4" transform="rotate(-148.7 544.3 306.7)" fill="#100200"/>
<polygon points="600.6,342.8 542.4,307.1 543.9,304.8 602.0,340.4" fill="#ff1a00"/>
<polygon points="600.9,342.2 543.2,306.8 542.9,307.4 600.6,342.8" fill="#d01400"/>
<polygon points="541.9,309.0 527.4,296.4 545.3,303.5" fill="#ff1d00"/>
<polygon points="542.8,307.5 527.4,296.4 541.9,309.0" fill="#cc1400"/>
<ellipse cx="538.1" cy="311.2" rx="1.3" ry="3.4" transform="rotate(-154.6 538.1 311.2)" fill="#100200"/>
<polygon points="597.7,341.2 536.3,311.8 537.5,309.4 598.9,338.7" fill="#ff1a00"/>
<polygon points="598.0,340.6 537.0,311.4 536.7,312.0 597.7,341.2" fill="#d01400"/>
<polygon points="535.9,313.7 520.2,302.6 538.7,307.9" fill="#ff1d00"/>
<polygon points="536.7,312.1 520.2,302.6 535.9,313.7" fill="#cc1400"/>
<ellipse cx="532.4" cy="316.3" rx="1.3" ry="3.4" transform="rotate(-160.5 532.4 316.3)" fill="#100200"/>
<polygon points="594.8,340.0 530.6,317.1 531.6,314.5 595.7,337.4" fill="#ff1a00"/>
<polygon points="595.0,339.4 531.3,316.6 531.1,317.2 594.8,340.0" fill="#d01400"/>
<polygon points="530.4,319.0 513.6,309.6 532.7,312.9" fill="#ff1d00"/>
<polygon points="531.0,317.3 513.6,309.6 530.4,319.0" fill="#cc1400"/>
<ellipse cx="527.1" cy="321.9" rx="1.3" ry="3.4" transform="rotate(-166.4 527.1 321.9)" fill="#100200"/>
<polygon points="591.7,339.1 525.5,322.9 526.2,320.3 592.4,336.4" fill="#ff1a00"/>
<polygon points="591.9,338.4 526.1,322.4 525.9,323.1 591.7,339.1" fill="#d01400"/>
<polygon points="525.5,324.9 507.7,317.2 527.1,318.6" fill="#ff1d00"/>
<polygon points="525.9,323.2 507.7,317.2 525.5,324.9" fill="#cc1400"/>
<ellipse cx="522.5" cy="328.1" rx="1.3" ry="3.4" transform="rotate(-172.3 522.5 328.1)" fill="#100200"/>
<polygon points="588.6,338.5 520.9,329.3 521.4,326.6 589.0,335.8" fill="#ff1a00"/>
<polygon points="588.7,337.8 521.5,328.7 521.4,329.4 588.6,338.5" fill="#d01400"/>
<polygon points="521.1,331.3 502.6,325.4 522.1,324.8" fill="#ff1d00"/>
<polygon points="521.4,329.5 502.6,325.4 521.1,331.3" fill="#cc1400"/>
<ellipse cx="518.5" cy="334.8" rx="1.3" ry="3.4" transform="rotate(-178.2 518.5 334.8)" fill="#100200"/>
<polygon points="585.4,338.2 517.0,336.1 517.2,333.4 585.5,335.5" fill="#ff1a00"/>
<polygon points="585.5,337.5 517.6,335.4 517.5,336.1 585.4,338.2" fill="#d01400"/>
<polygon points="517.4,338.1 498.4,334.2 517.8,331.5" fill="#ff1d00"/>
<polygon points="517.5,336.2 498.4,334.2 517.4,338.1" fill="#cc1400"/>
<ellipse cx="515.2" cy="341.8" rx="1.3" ry="3.4" transform="rotate(175.9 515.2 341.8)" fill="#100200"/>
<polygon points="582.3,338.3 513.8,343.3 513.7,340.6 582.1,335.6" fill="#ff1a00"/>
<polygon points="582.2,337.6 514.3,342.6 514.3,343.3 582.3,338.3" fill="#d01400"/>
<polygon points="514.4,345.2 495.0,343.3 514.1,338.6" fill="#ff1d00"/>
<polygon points="514.3,343.4 495.0,343.3 514.4,345.2" fill="#cc1400"/>
<ellipse cx="512.5" cy="349.2" rx="1.3" ry="3.4" transform="rotate(170.0 512.5 349.2)" fill="#100200"/>
<polygon points="579.1,338.7 511.4,350.8 511.0,348.1 578.6,336.0" fill="#ff1a00"/>
<polygon points="579.0,338.0 511.8,350.1 511.9,350.8 579.1,338.7" fill="#d01400"/>
<polygon points="512.1,352.7 492.5,352.8 511.2,346.1" fill="#ff1d00"/>
<polygon points="511.9,350.9 492.5,352.8 512.1,352.7" fill="#cc1400"/>
<ellipse cx="510.7" cy="356.9" rx="1.3" ry="3.4" transform="rotate(164.0 510.7 356.9)" fill="#100200"/>
<polygon points="576.0,339.4 509.7,358.6 509.0,355.9 575.3,336.8" fill="#ff1a00"/>
<polygon points="575.8,338.8 510.0,357.8 510.1,358.5 576.0,339.4" fill="#d01400"/>
<polygon points="510.6,360.3 491.0,362.6 509.0,353.9" fill="#ff1d00"/>
<polygon points="510.2,358.6 491.0,362.6 510.6,360.3" fill="#cc1400"/>
<ellipse cx="509.6" cy="364.7" rx="1.3" ry="3.4" transform="rotate(158.1 509.6 364.7)" fill="#100200"/>
<polygon points="573.0,340.5 508.7,366.5 507.8,363.9 572.0,337.9" fill="#ff1a00"/>
<polygon points="572.7,339.8 509.0,365.7 509.2,366.3 573.0,340.5" fill="#d01400"/>
<polygon points="509.9,368.1 490.4,372.4 507.6,361.9" fill="#ff1d00"/>
<polygon points="509.2,366.4 490.4,372.4 509.9,368.1" fill="#cc1400"/>
<ellipse cx="509.3" cy="372.6" rx="1.3" ry="3.4" transform="rotate(152.2 509.3 372.6)" fill="#100200"/>
<polygon points="570.1,341.8 508.6,374.5 507.4,372.0 568.8,339.4" fill="#ff1a00"/>
<polygon points="569.8,341.2 508.8,373.6 509.1,374.3 570.1,341.8" fill="#d01400"/>
<polygon points="509.9,376.0 490.9,382.3 507.0,370.0" fill="#ff1d00"/>
<polygon points="509.1,374.4 490.9,382.3 509.9,376.0" fill="#cc1400"/>
<ellipse cx="509.7" cy="380.5" rx="1.3" ry="3.4" transform="rotate(146.3 509.7 380.5)" fill="#100200"/>
<polygon points="567.3,343.5 509.3,382.5 507.8,380.1 565.8,341.2" fill="#ff1a00"/>
<polygon points="567.0,342.9 509.3,381.6 509.7,382.2 567.3,343.5" fill="#d01400"/>
<polygon points="510.7,383.8 492.4,392.2 507.2,378.2" fill="#ff1d00"/>
<polygon points="509.8,382.3 492.4,392.2 510.7,383.8" fill="#cc1400"/>
<ellipse cx="511.0" cy="388.3" rx="1.3" ry="3.4" transform="rotate(140.4 511.0 388.3)" fill="#100200"/>
<polygon points="564.8,345.4 510.8,390.4 509.1,388.2 563.0,343.3" fill="#ff1a00"/>
<polygon points="564.3,344.9 510.7,389.5 511.2,390.0 564.8,345.4" fill="#d01400"/>
<polygon points="512.4,391.6 494.8,401.8 508.3,386.3" fill="#ff1d00"/>
<polygon points="511.2,390.1 494.8,401.8 512.4,391.6" fill="#cc1400"/>
<ellipse cx="513.1" cy="396.0" rx="1.3" ry="3.4" transform="rotate(134.5 513.1 396.0)" fill="#100200"/>
<polygon points="562.4,347.6 513.1,398.1 511.1,396.1 560.5,345.6" fill="#ff1a00"/>
<polygon points="561.9,347.1 512.9,397.2 513.4,397.7 562.4,347.6" fill="#d01400"/>
<polygon points="514.8,399.1 498.3,411.2 510.1,394.3" fill="#ff1d00"/>
<polygon points="513.5,397.8 498.3,411.2 514.8,399.1" fill="#cc1400"/>
<ellipse cx="516.0" cy="403.5" rx="1.3" ry="3.4" transform="rotate(128.6 516.0 403.5)" fill="#100200"/>
<polygon points="560.3,350.0 516.1,405.5 514.0,403.7 558.1,348.3" fill="#ff1a00"/>
<polygon points="559.7,349.6 515.9,404.7 516.5,405.1 560.3,350.0" fill="#d01400"/>
<polygon points="517.9,406.4 502.7,420.2 512.8,402.1" fill="#ff1d00"/>
<polygon points="516.5,405.2 502.7,420.2 517.9,406.4" fill="#cc1400"/>
<ellipse cx="519.6" cy="410.6" rx="1.3" ry="3.4" transform="rotate(122.7 519.6 410.6)" fill="#100200"/>
<polygon points="558.4,352.6 519.9,412.6 517.6,411.0 556.1,351.1" fill="#ff1a00"/>
<polygon points="557.8,352.3 519.6,411.8 520.2,412.2 558.4,352.6" fill="#d01400"/>
<polygon points="521.8,413.3 508.0,428.7 516.3,409.5" fill="#ff1d00"/>
<polygon points="520.3,412.2 508.0,428.7 521.8,413.3" fill="#cc1400"/>
<ellipse cx="523.9" cy="417.3" rx="1.3" ry="3.4" transform="rotate(116.8 523.9 417.3)" fill="#100200"/>
<polygon points="556.8,355.5 524.5,419.3 522.0,418.0 554.3,354.2" fill="#ff1a00"/>
<polygon points="556.2,355.1 524.1,418.5 524.7,418.8 556.8,355.5" fill="#d01400"/>
<polygon points="526.4,419.7 514.1,436.6 520.5,416.6" fill="#ff1d00"/>
<polygon points="524.8,418.8 514.1,436.6 526.4,419.7" fill="#cc1400"/>
<ellipse cx="528.9" cy="423.5" rx="1.3" ry="3.4" transform="rotate(110.9 528.9 423.5)" fill="#100200"/>
<polygon points="555.4,358.4 529.7,425.4 527.1,424.4 552.9,357.4" fill="#ff1a00"/>
<polygon points="554.8,358.2 529.2,424.7 529.9,424.9 555.4,358.4" fill="#d01400"/>
<polygon points="531.7,425.6 521.1,443.8 525.4,423.2" fill="#ff1d00"/>
<polygon points="530.0,425.0 521.1,443.8 531.7,425.6" fill="#cc1400"/>
<ellipse cx="534.5" cy="429.2" rx="1.3" ry="3.4" transform="rotate(105.0 534.5 429.2)" fill="#100200"/>
<polygon points="554.4,361.5 535.5,431.0 532.8,430.2 551.8,360.8" fill="#ff1a00"/>
<polygon points="553.8,361.4 534.9,430.3 535.6,430.5 554.4,361.5" fill="#d01400"/>
<polygon points="537.5,431.0 528.8,450.2 531.0,429.2" fill="#ff1d00"/>
<polygon points="535.7,430.5 528.8,450.2 537.5,431.0" fill="#cc1400"/>
<ellipse cx="540.7" cy="434.2" rx="1.3" ry="3.4" transform="rotate(99.1 540.7 434.2)" fill="#100200"/>
<polygon points="553.7,364.7 541.8,435.9 539.0,435.4 551.0,364.3" fill="#ff1a00"/>
<polygon points="553.0,364.6 541.2,435.3 541.9,435.4 553.7,364.7" fill="#d01400"/>
<polygon points="543.8,435.7 537.1,455.8 537.2,434.6" fill="#ff1d00"/>
<polygon points="542.0,435.4 537.1,455.8 543.8,435.7" fill="#cc1400"/>
<ellipse cx="547.3" cy="438.6" rx="1.3" ry="3.4" transform="rotate(93.2 547.3 438.6)" fill="#100200"/>
<polygon points="553.3,368.0 548.6,440.1 545.8,440.0 550.6,367.8" fill="#ff1a00"/>
<polygon points="552.7,368.0 548.0,439.6 548.7,439.6 553.3,368.0" fill="#d01400"/>
<polygon points="550.6,439.7 545.9,460.4 543.9,439.3" fill="#ff1d00"/>
<polygon points="548.8,439.6 545.9,460.4 550.6,439.7" fill="#cc1400"/>
<ellipse cx="554.4" cy="442.2" rx="1.3" ry="3.4" transform="rotate(87.3 554.4 442.2)" fill="#100200"/>
<polygon points="553.3,371.3 555.9,443.6 553.1,443.7 550.5,371.4" fill="#ff1a00"/>
<polygon points="552.6,371.3 555.2,443.1 555.9,443.1 553.3,371.3" fill="#d01400"/>
<polygon points="557.8,443.0 555.2,464.1 551.1,443.3" fill="#ff1d00"/>
<polygon points="556.0,443.1 555.2,464.1 557.8,443.0" fill="#cc1400"/>
<ellipse cx="561.8" cy="445.0" rx="1.3" ry="3.4" transform="rotate(81.4 561.8 445.0)" fill="#100200"/>
<polygon points="553.6,374.6 563.4,446.3 560.6,446.7 550.8,375.0" fill="#ff1a00"/>
<polygon points="552.9,374.7 562.7,445.9 563.4,445.8 553.6,374.6" fill="#d01400"/>
<polygon points="565.3,445.5 564.8,466.8 558.6,446.5" fill="#ff1d00"/>
<polygon points="563.5,445.7 564.8,466.8 565.3,445.5" fill="#cc1400"/>
<ellipse cx="569.5" cy="447.1" rx="1.3" ry="3.4" transform="rotate(75.5 569.5 447.1)" fill="#100200"/>
<polygon points="554.2,377.8 571.2,448.1 568.5,448.9 551.5,378.5" fill="#ff1a00"/>
<polygon points="553.5,378.0 570.4,447.8 571.1,447.6 554.2,377.8" fill="#d01400"/>
<polygon points="573.0,447.1 574.7,468.4 566.5,448.9" fill="#ff1d00"/>
<polygon points="571.2,447.6 574.7,468.4 573.0,447.1" fill="#cc1400"/>
<ellipse cx="577.4" cy="448.2" rx="1.3" ry="3.4" transform="rotate(69.6 577.4 448.2)" fill="#100200"/>
<polygon points="555.1,380.9 579.2,449.1 576.5,450.2 552.5,381.9" fill="#ff1a00"/>
<polygon points="554.5,381.2 578.4,448.9 579.0,448.6 555.1,380.9" fill="#d01400"/>
<polygon points="580.9,447.9 584.7,468.9 574.5,450.4" fill="#ff1d00"/>
<polygon points="579.1,448.6 584.7,468.9 580.9,447.9" fill="#cc1400"/>
<ellipse cx="585.3" cy="448.6" rx="1.3" ry="3.4" transform="rotate(63.7 585.3 448.6)" fill="#100200"/>
<polygon points="556.4,384.0 587.2,449.3 584.7,450.6 553.9,385.2" fill="#ff1a00"/>
<polygon points="555.8,384.3 586.3,449.1 587.0,448.8 556.4,384.0" fill="#d01400"/>
<polygon points="588.7,447.9 594.6,468.3 582.7,451.0" fill="#ff1d00"/>
<polygon points="587.1,448.8 594.6,468.3 588.7,447.9" fill="#cc1400"/>
<ellipse cx="593.2" cy="448.1" rx="1.3" ry="3.4" transform="rotate(57.8 593.2 448.1)" fill="#100200"/>
<polygon points="557.9,386.9 595.2,448.6 592.8,450.1 555.6,388.4" fill="#ff1a00"/>
<polygon points="557.3,387.3 594.3,448.5 594.9,448.1 557.9,386.9" fill="#d01400"/>
<polygon points="596.6,447.0 604.5,466.7 590.9,450.8" fill="#ff1d00"/>
<polygon points="595.0,448.0 604.5,466.7 596.6,447.0" fill="#cc1400"/>
<ellipse cx="601.0" cy="446.7" rx="1.3" ry="3.4" transform="rotate(51.9 601.0 446.7)" fill="#100200"/>
<polygon points="559.8,389.6 603.0,447.0 600.8,448.8 557.6,391.4" fill="#ff1a00"/>
<polygon points="559.2,390.0 602.2,447.0 602.7,446.6 559.8,389.6" fill="#d01400"/>
<polygon points="604.3,445.3 614.1,464.0 599.0,449.7" fill="#ff1d00"/>
<polygon points="602.8,446.5 614.1,464.0 604.3,445.3" fill="#cc1400"/>
<ellipse cx="608.7" cy="444.5" rx="1.3" ry="3.4" transform="rotate(46.0 608.7 444.5)" fill="#100200"/>
<polygon points="561.9,392.1 610.7,444.6 608.7,446.6 559.9,394.1" fill="#ff1a00"/>
<polygon points="561.4,392.6 609.8,444.7 610.3,444.2 561.9,392.1" fill="#d01400"/>
<polygon points="611.7,442.8 623.4,460.3 606.9,447.7" fill="#ff1d00"/>
<polygon points="610.4,444.1 623.4,460.3 611.7,442.8" fill="#cc1400"/>
<ellipse cx="616.0" cy="441.5" rx="1.3" ry="3.4" transform="rotate(40.1 616.0 441.5)" fill="#100200"/>
<polygon points="564.2,394.4 618.0,441.4 616.2,443.6 562.4,396.6" fill="#ff1a00"/>
<polygon points="562.9,396.0 616.3,442.7 615.9,443.3 562.4,396.6" fill="#d01400"/>
<polygon points="618.9,439.4 632.2,455.6 614.6,444.8" fill="#ff1d00"/>
<polygon points="615.8,443.3 632.2,455.6 614.6,444.8" fill="#cc1400"/>
<ellipse cx="623.0" cy="437.7" rx="1.3" ry="3.4" transform="rotate(34.2 623.0 437.7)" fill="#100200"/>
<polygon points="566.8,396.4 625.0,437.4 623.5,439.8 565.2,398.8" fill="#ff1a00"/>
<polygon points="565.6,398.2 623.4,438.9 623.0,439.5 565.2,398.8" fill="#d01400"/>
<polygon points="625.7,435.4 640.5,450.0 621.9,441.2" fill="#ff1d00"/>
<polygon points="623.0,439.6 640.5,450.0 621.9,441.2" fill="#cc1400"/>
<ellipse cx="629.6" cy="433.2" rx="1.3" ry="3.4" transform="rotate(28.3 629.6 433.2)" fill="#100200"/>
<polygon points="569.6,398.1 631.5,432.7 630.2,435.2 568.2,400.7" fill="#ff1a00"/>
<polygon points="568.6,400.0 630.1,434.3 629.8,435.0 568.2,400.7" fill="#d01400"/>
<polygon points="632.0,430.6 648.1,443.6 628.9,436.8" fill="#ff1d00"/>
<polygon points="629.7,435.1 648.1,443.6 628.9,436.8" fill="#cc1400"/>
<ellipse cx="635.7" cy="428.1" rx="1.3" ry="3.4" transform="rotate(22.4 635.7 428.1)" fill="#100200"/>
<polygon points="572.5,399.6 637.5,427.3 636.5,430.0 571.4,402.2" fill="#ff1a00"/>
<polygon points="571.7,401.6 636.3,429.1 636.0,429.8 571.4,402.2" fill="#d01400"/>
<polygon points="637.8,425.2 655.1,436.3 635.3,431.7" fill="#ff1d00"/>
<polygon points="636.0,429.9 655.1,436.3 635.3,431.7" fill="#cc1400"/>
<ellipse cx="641.2" cy="422.3" rx="1.3" ry="3.4" transform="rotate(16.5 641.2 422.3)" fill="#100200"/>
<polygon points="575.5,400.7 642.9,421.3 642.2,424.1 574.7,403.5" fill="#ff1a00"/>
<polygon points="574.9,402.8 641.9,423.3 641.7,424.0 574.7,403.5" fill="#d01400"/>
<polygon points="642.9,419.2 661.2,428.4 641.2,425.9" fill="#ff1d00"/>
<polygon points="641.6,424.1 661.2,428.4 641.2,425.9" fill="#cc1400"/>
<ellipse cx="646.0" cy="416.0" rx="1.3" ry="3.4" transform="rotate(10.6 646.0 416.0)" fill="#100200"/>
<polygon points="578.7,401.5 647.7,414.8 647.2,417.7 578.2,404.3" fill="#ff1a00"/>
<polygon points="578.3,403.6 646.8,416.9 646.7,417.6 578.2,404.3" fill="#d01400"/>
<polygon points="647.5,412.7 666.5,419.9 646.4,419.6" fill="#ff1d00"/>
<polygon points="646.7,417.7 666.5,419.9 646.4,419.6" fill="#cc1400"/>
<ellipse cx="650.2" cy="409.2" rx="1.3" ry="3.4" transform="rotate(4.7 650.2 409.2)" fill="#100200"/>
<polygon points="581.9,401.9 651.7,407.9 651.5,410.7 581.7,404.8" fill="#ff1a00"/>
<polygon points="581.7,404.1 651.1,410.0 651.0,410.7 581.7,404.8" fill="#d01400"/>
<polygon points="651.3,405.8 670.8,410.9 650.9,412.7" fill="#ff1d00"/>
<polygon points="651.0,410.8 670.8,410.9 650.9,412.7" fill="#cc1400"/>
<ellipse cx="653.7" cy="402.0" rx="1.3" ry="3.4" transform="rotate(-1.2 653.7 402.0)" fill="#100200"/>
<polygon points="585.2,402.0 655.0,400.5 655.1,403.4 585.2,404.9" fill="#ff1a00"/>
<polygon points="585.2,404.2 654.6,402.7 654.6,403.4 585.2,404.9" fill="#d01400"/>
<polygon points="654.4,398.5 674.3,401.6 654.7,405.4" fill="#ff1d00"/>
<polygon points="654.6,403.5 674.3,401.6 654.7,405.4" fill="#cc1400"/>
<ellipse cx="656.4" cy="394.5" rx="1.3" ry="3.4" transform="rotate(-7.1 656.4 394.5)" fill="#100200"/>
<polygon points="588.4,401.8 657.6,392.9 658.0,395.7 588.7,404.6" fill="#ff1a00"/>
<polygon points="588.7,403.9 657.4,395.1 657.5,395.8 588.7,404.6" fill="#d01400"/>
<polygon points="656.8,391.0 676.7,391.9 657.8,397.8" fill="#ff1d00"/>
<polygon points="657.5,395.9 676.7,391.9 657.8,397.8" fill="#cc1400"/>
<ellipse cx="658.3" cy="386.8" rx="1.3" ry="3.4" transform="rotate(-13.0 658.3 386.8)" fill="#100200"/>
<polygon points="591.6,401.2 659.3,385.1 660.0,387.8 592.2,404.0" fill="#ff1a00"/>
<polygon points="592.1,403.3 659.3,387.3 659.5,388.0 592.2,404.0" fill="#d01400"/>
<polygon points="658.3,383.2 678.1,382.0 660.0,389.9" fill="#ff1d00"/>
<polygon points="659.5,388.1 678.1,382.0 660.0,389.9" fill="#cc1400"/>
<ellipse cx="659.4" cy="378.9" rx="1.3" ry="3.4" transform="rotate(-18.9 659.4 378.9)" fill="#100200"/>
<polygon points="594.7,400.3 660.3,377.1 661.2,379.8 595.6,403.0" fill="#ff1a00"/>
<polygon points="595.4,402.3 660.5,379.3 660.8,380.0 595.6,403.0" fill="#d01400"/>
<polygon points="659.1,375.4 678.6,372.1 661.4,381.8" fill="#ff1d00"/>
<polygon points="660.8,380.1 678.6,372.1 661.4,381.8" fill="#cc1400"/>
<ellipse cx="659.8" cy="371.0" rx="1.3" ry="3.4" transform="rotate(-24.8 659.8 371.0)" fill="#100200"/>
<polygon points="597.7,399.0 660.4,369.1 661.6,371.7 598.9,401.6" fill="#ff1a00"/>
<polygon points="598.6,401.0 660.9,371.2 661.2,371.9 598.9,401.6" fill="#d01400"/>
<polygon points="659.1,367.5 678.0,362.3 662.0,373.7" fill="#ff1d00"/>
<polygon points="661.2,372.0 678.0,362.3 662.0,373.7" fill="#cc1400"/>
<ellipse cx="659.3" cy="363.1" rx="1.3" ry="3.4" transform="rotate(-30.7 659.3 363.1)" fill="#100200"/>
<polygon points="600.6,397.5 659.7,361.2 661.2,363.6 602.0,399.9" fill="#ff1a00"/>
<polygon points="601.7,399.3 660.4,363.2 660.8,363.8 602.0,399.9" fill="#d01400"/>
<polygon points="658.3,359.7 676.5,352.5 661.8,365.5" fill="#ff1d00"/>
<polygon points="660.8,363.9 676.5,352.5 661.8,365.5" fill="#cc1400"/>
<ellipse cx="658.0" cy="355.3" rx="1.3" ry="3.4" transform="rotate(-36.6 658.0 355.3)" fill="#100200"/>
<polygon points="603.3,395.6 658.3,353.3 660.0,355.6 604.9,397.9" fill="#ff1a00"/>
<polygon points="604.5,397.4 659.1,355.3 659.6,355.9 604.9,397.9" fill="#d01400"/>
<polygon points="656.7,352.1 674.0,343.0 660.8,357.4" fill="#ff1d00"/>
<polygon points="659.6,356.0 674.0,343.0 660.8,357.4" fill="#cc1400"/>
<ellipse cx="656.0" cy="347.7" rx="1.3" ry="3.4" transform="rotate(-42.5 656.0 347.7)" fill="#100200"/>
<polygon points="605.8,393.5 656.0,345.7 657.9,347.8 607.6,395.6" fill="#ff1a00"/>
<polygon points="607.2,395.1 657.1,347.6 657.6,348.1 607.6,395.6" fill="#d01400"/>
<polygon points="654.4,344.6 670.5,333.9 658.9,349.5" fill="#ff1d00"/>
<polygon points="657.7,348.2 670.5,333.9 658.9,349.5" fill="#cc1400"/>
<ellipse cx="653.2" cy="340.4" rx="1.3" ry="3.4" transform="rotate(-48.4 653.2 340.4)" fill="#100200"/>
<polygon points="608.0,391.1 653.1,338.4 655.2,340.3 610.1,393.0" fill="#ff1a00"/>
<polygon points="609.6,392.6 654.3,340.2 654.8,340.6 610.1,393.0" fill="#d01400"/>
<polygon points="651.3,337.5 666.2,325.2 656.3,341.9" fill="#ff1d00"/>
<polygon points="654.9,340.7 666.2,325.2 656.3,341.9" fill="#cc1400"/>
<ellipse cx="649.7" cy="333.4" rx="1.3" ry="3.4" transform="rotate(-54.3 649.7 333.4)" fill="#100200"/>
<polygon points="610.0,388.5 649.4,331.5 651.7,333.1 612.3,390.2" fill="#ff1a00"/>
<polygon points="611.7,389.8 650.8,333.1 651.4,333.5 612.3,390.2" fill="#d01400"/>
<polygon points="647.6,330.8 661.1,317.0 652.9,334.6" fill="#ff1d00"/>
<polygon points="651.5,333.5 661.1,317.0 652.9,334.6" fill="#cc1400"/>
<ellipse cx="645.6" cy="326.8" rx="1.3" ry="3.4" transform="rotate(-60.2 645.6 326.8)" fill="#100200"/>
<polygon points="611.7,385.7 645.1,324.9 647.5,326.3 614.2,387.2" fill="#ff1a00"/>
<polygon points="613.5,386.8 646.6,326.4 647.2,326.7 614.2,387.2" fill="#d01400"/>
<polygon points="643.2,324.4 655.2,309.4 648.9,327.7" fill="#ff1d00"/>
<polygon points="647.3,326.8 655.2,309.4 648.9,327.7" fill="#cc1400"/>
<ellipse cx="640.8" cy="320.7" rx="1.3" ry="3.4" transform="rotate(-66.1 640.8 320.7)" fill="#100200"/>
<polygon points="613.2,382.8 640.1,318.9 642.6,320.0 615.7,383.9" fill="#ff1a00"/>
<polygon points="615.1,383.6 641.8,320.2 642.4,320.5 615.7,383.9" fill="#d01400"/>
<polygon points="638.2,318.6 648.6,302.4 644.2,321.3" fill="#ff1d00"/>
<polygon points="642.5,320.5 648.6,302.4 644.2,321.3" fill="#cc1400"/>
<ellipse cx="635.5" cy="315.2" rx="1.3" ry="3.4" transform="rotate(-72.0 635.5 315.2)" fill="#100200"/>
<polygon points="614.3,379.7 634.6,313.5 637.2,314.3 616.9,380.6" fill="#ff1a00"/>
<polygon points="616.3,380.3 636.4,314.6 637.1,314.8 616.9,380.6" fill="#d01400"/>
<polygon points="632.7,313.3 641.3,296.2 638.9,315.3" fill="#ff1d00"/>
<polygon points="637.2,314.8 641.3,296.2 638.9,315.3" fill="#cc1400"/>
<ellipse cx="629.7" cy="310.2" rx="1.3" ry="3.4" transform="rotate(-77.9 629.7 310.2)" fill="#100200"/>
<polygon points="615.1,376.5 628.6,308.6 631.3,309.2 617.8,377.1" fill="#ff1a00"/>
<polygon points="617.1,376.9 630.5,309.5 631.2,309.6 617.8,377.1" fill="#d01400"/>
<polygon points="626.7,308.7 633.5,290.8 633.0,310.0" fill="#ff1d00"/>
<polygon points="631.3,309.7 633.5,290.8 633.0,310.0" fill="#cc1400"/>
<ellipse cx="623.4" cy="305.9" rx="1.3" ry="3.4" transform="rotate(-83.8 623.4 305.9)" fill="#100200"/>
<polygon points="615.6,373.2 622.2,304.4 624.9,304.7 618.3,373.5" fill="#ff1a00"/>
<polygon points="617.6,373.5 624.1,305.1 624.8,305.2 618.3,373.5" fill="#d01400"/>
<polygon points="620.2,304.7 625.3,286.2 626.7,305.4" fill="#ff1d00"/>
<polygon points="624.9,305.2 625.3,286.2 626.7,305.4" fill="#cc1400"/>
<ellipse cx="616.7" cy="302.2" rx="1.3" ry="3.4" transform="rotate(-89.7 616.7 302.2)" fill="#100200"/>
<polygon points="615.7,370.0 615.3,300.8 618.0,300.9 618.5,370.0" fill="#ff1a00"/>
<polygon points="617.8,370.0 617.4,301.3 618.0,301.3 618.5,370.0" fill="#d01400"/>
<polygon points="613.5,301.3 616.6,282.4 619.9,301.4" fill="#ff1d00"/>
<polygon points="618.1,301.3 616.6,282.4 619.9,301.4" fill="#cc1400"/>
<ellipse cx="618.1" cy="305.4" rx="1.3" ry="3.4" transform="rotate(-88.6 618.1 305.4)" fill="#100200"/>
<polygon points="615.7,373.3 616.7,304.0 619.4,304.1 618.5,373.3" fill="#ff1a00"/>
<polygon points="617.8,373.3 618.7,304.6 619.4,304.6 618.5,373.3" fill="#d01400"/>
<polygon points="614.8,304.5 618.3,285.6 621.3,304.6" fill="#ff1d00"/>
<polygon points="619.5,304.6 618.3,285.6 621.3,304.6" fill="#cc1400"/>
<line x1="604.40" y1="367.50" x2="615.40" y2="367.00" stroke="#19d019" stroke-width="1.0" />
<line x1="603.00" y1="373.40" x2="614.50" y2="375.50" stroke="#19d019" stroke-width="1.0" />
<line x1="619.00" y1="366.30" x2="620.00" y2="364.80" stroke="#2010e0" stroke-width="1.2" />
<line x1="617.30" y1="375.00" x2="618.30" y2="373.50" stroke="#2010e0" stroke-width="1.2" />
<text x="599.60" y="371.94" font-size="6.6" fill="#ffffff" textLength="13.60" lengthAdjust="spacingAndGlyphs" stroke="#ffffff" stroke-width="0.18" transform="rotate(0.05 599.6 371.9)" >base_</text>
<text x="609.00" y="380.34" font-size="6.6" fill="#ffffff" textLength="4.20" lengthAdjust="spacingAndGlyphs" stroke="#ffffff" stroke-width="0.18" transform="rotate(0.05 609.0 380.3)" >o</text>
</g>
<text x="516.80" y="241.83" font-size="6.0" fill="#3a3a3a" textLength="15.00" lengthAdjust="spacingAndGlyphs" font-weight="bold" stroke="#3a3a3a" stroke-width="0.2" transform="rotate(0.05 516.8 241.8)" >RViz*</text>
<line x1="729.50" y1="241.30" x2="733.10" y2="241.30" stroke="#444" stroke-width="0.8" />
<rect x="743.0" y="238.2" width="3.0" height="2.8" fill="none" stroke="#444" stroke-width="0.7"/>
<line x1="756.80" y1="237.90" x2="760.00" y2="241.10" stroke="#333" stroke-width="0.8" />
<line x1="760.00" y1="237.90" x2="756.80" y2="241.10" stroke="#333" stroke-width="0.8" />
<text x="287.30" y="253.66" font-size="5.8" fill="#3a3a3a" textLength="10.50" lengthAdjust="spacingAndGlyphs" stroke="#3a3a3a" stroke-width="0.2" transform="rotate(0.05 287.3 253.7)" >File</text>
<line x1="287.30" y1="254.80" x2="290.60" y2="254.80" stroke="#3a3a3a" stroke-width="0.5" />
<text x="303.30" y="253.66" font-size="5.8" fill="#3a3a3a" textLength="18.00" lengthAdjust="spacingAndGlyphs" stroke="#3a3a3a" stroke-width="0.2" transform="rotate(0.05 303.3 253.7)" >Panels</text>
<line x1="303.30" y1="254.80" x2="307.00" y2="254.80" stroke="#3a3a3a" stroke-width="0.5" />
<text x="326.80" y="253.66" font-size="5.8" fill="#3a3a3a" textLength="12.90" lengthAdjust="spacingAndGlyphs" stroke="#3a3a3a" stroke-width="0.2" transform="rotate(0.05 326.8 253.7)" >Help</text>
<line x1="326.80" y1="254.80" x2="331.20" y2="254.80" stroke="#3a3a3a" stroke-width="0.5" />
<text x="297.40" y="265.56" font-size="5.8" fill="#3a3a3a" textLength="16.70" lengthAdjust="spacingAndGlyphs" stroke="#3a3a3a" stroke-width="0.2" transform="rotate(0.05 297.4 265.6)" >Interact</text>
<text x="331.60" y="265.56" font-size="5.8" fill="#3a3a3a" textLength="29.90" lengthAdjust="spacingAndGlyphs" stroke="#3a3a3a" stroke-width="0.2" transform="rotate(0.05 331.6 265.6)" >Move Camera</text>
<text x="378.70" y="265.56" font-size="5.8" fill="#3a3a3a" textLength="13.20" lengthAdjust="spacingAndGlyphs" stroke="#3a3a3a" stroke-width="0.2" transform="rotate(0.05 378.7 265.6)" >Select</text>
<text x="409.80" y="265.56" font-size="5.8" fill="#3a3a3a" textLength="30.40" lengthAdjust="spacingAndGlyphs" stroke="#3a3a3a" stroke-width="0.2" transform="rotate(0.05 409.8 265.6)" >Focus Camera</text>
<text x="457.20" y="265.56" font-size="5.8" fill="#3a3a3a" textLength="18.40" lengthAdjust="spacingAndGlyphs" stroke="#3a3a3a" stroke-width="0.2" transform="rotate(0.05 457.2 265.6)" >Measure</text>
<text x="493.20" y="265.56" font-size="5.8" fill="#3a3a3a" textLength="37.80" lengthAdjust="spacingAndGlyphs" stroke="#3a3a3a" stroke-width="0.2" transform="rotate(0.05 493.2 265.6)" >2D Pose Estimate</text>
<text x="548.50" y="265.56" font-size="5.8" fill="#3a3a3a" textLength="28.20" lengthAdjust="spacingAndGlyphs" stroke="#3a3a3a" stroke-width="0.2" transform="rotate(0.05 548.5 265.6)" >2D Goal Pose</text>
<text x="593.90" y="265.56" font-size="5.8" fill="#3a3a3a" textLength="28.50" lengthAdjust="spacingAndGlyphs" stroke="#3a3a3a" stroke-width="0.2" transform="rotate(0.05 593.9 265.6)" >Publish Point</text>
<rect x="291.5" y="260.1" width="1.5" height="3.4" rx="0.6" fill="#fdfdfd" stroke="#444" stroke-width="0.5"/>
<rect x="290.2" y="262.4" width="6.5" height="4.1" rx="1.2" fill="#fdfdfd" stroke="#444" stroke-width="0.55"/>
<path d="M327.3,260.0 l1.5,1.7 h-0.9 v1.3 h1.8 v-0.9 l1.6,1.4 l-1.6,1.4 v-0.9 h-1.8 v1.9 h-1.2 v-1.9 h-1.8 v0.9 l-1.6,-1.4 l1.6,-1.4 v0.9 h1.8 v-1.3 h-0.9 z" fill="#f2f2f2" stroke="#666" stroke-width="0.45"/>
<rect x="371.50" y="260.90" width="6.70" height="5.10" fill="#fdf6a5" stroke="#b3a53a" stroke-width="0.5"/>
<circle cx="405.5" cy="263.5" r="1.7" fill="#d8d8d8" stroke="#777" stroke-width="0.45"/>
<line x1="402.10" y1="263.50" x2="408.90" y2="263.50" stroke="#777" stroke-width="0.55" />
<line x1="405.50" y1="260.10" x2="405.50" y2="266.90" stroke="#777" stroke-width="0.55" />
<rect x="449.70" y="262.50" width="6.20" height="2.10" fill="#d9cf86" stroke="#8f8a4d" stroke-width="0.4"/>
<line x1="485.80" y1="266.20" x2="491.80" y2="260.90" stroke="#25c525" stroke-width="1.25" />
<line x1="541.20" y1="266.20" x2="547.20" y2="260.90" stroke="#25c525" stroke-width="1.25" />
<path d="M590.1,267.1 l-1.7,-3.6 a1.95,1.95 0 1 1 3.4,0 z" fill="#d4552a" stroke="#8a2f14" stroke-width="0.35"/>
<line x1="633.30" y1="263.50" x2="638.30" y2="263.50" stroke="#3f76c8" stroke-width="1.5" />
<line x1="635.80" y1="261.00" x2="635.80" y2="266.00" stroke="#3f76c8" stroke-width="1.5" />
<line x1="652.40" y1="263.50" x2="657.40" y2="263.50" stroke="#3f76c8" stroke-width="1.5" />
<path d="M658.6,266.9 h1.8 l-0.9,1.1 z" fill="#333"/>
<text x="294.00" y="278.36" font-size="5.8" fill="#333" textLength="22.10" lengthAdjust="spacingAndGlyphs" stroke="#333" stroke-width="0.2" transform="rotate(0.05 294.0 278.4)" >Displays</text>
<rect x="286.00" y="272.80" width="5.60" height="4.20" fill="#5a7dd6" stroke="#333" stroke-width="0.5"/>
<rect x="287.20" y="273.50" width="1.50" height="2.80" fill="#d24a4a" />
<rect x="288.70" y="273.50" width="1.40" height="2.80" fill="#58b558" />
<line x1="287.20" y1="278.30" x2="290.60" y2="278.30" stroke="#333" stroke-width="0.7" />
<rect x="413.10" y="272.80" width="5.80" height="5.80" fill="#f4f4f4" />
<circle cx="416.0" cy="275.7" r="2.2" fill="#e23b3b" stroke="#b02020" stroke-width="0.35"/>
<line x1="414.90" y1="275.70" x2="417.10" y2="275.70" stroke="#fff" stroke-width="0.7" />
<path d="M286.82,283.80 h2.55 l-1.28,1.62 z" fill="#666"/>
<circle cx="296.10" cy="284.50" r="2.55" fill="#7aa6ea" stroke="#5a86cc" stroke-width="0.46"/>
<ellipse cx="296.10" cy="284.50" rx="1.04" ry="2.55" fill="none" stroke="#b8d0f4" stroke-width="0.35"/>
<text x="302.10" y="286.56" font-size="5.8" fill="#3a3a3a" textLength="40.80" lengthAdjust="spacingAndGlyphs" stroke="#3a3a3a" stroke-width="0.2" transform="rotate(0.05 302.1 286.6)" >Global Options</text>
<text x="301.40" y="294.19" font-size="5.8" fill="#3a3a3a" textLength="32.80" lengthAdjust="spacingAndGlyphs" stroke="#3a3a3a" stroke-width="0.2" transform="rotate(0.05 301.4 294.2)" >Fixed Frame</text>
<text x="353.60" y="294.19" font-size="5.8" fill="#3a3a3a" textLength="15.50" lengthAdjust="spacingAndGlyphs" stroke="#3a3a3a" stroke-width="0.2" transform="rotate(0.05 353.6 294.2)" >odom</text>
<text x="301.40" y="301.82" font-size="5.8" fill="#3a3a3a" textLength="48.40" lengthAdjust="spacingAndGlyphs" stroke="#3a3a3a" stroke-width="0.2" transform="rotate(0.05 301.4 301.8)" >Background Color</text>
<rect x="353.60" y="297.26" width="5.20" height="5.00" fill="#222" stroke="#111" stroke-width="0.3"/>
<text x="361.70" y="301.82" font-size="5.8" fill="#3a3a3a" textLength="25.50" lengthAdjust="spacingAndGlyphs" stroke="#3a3a3a" stroke-width="0.2" transform="rotate(0.05 361.7 301.8)" >48; 48; 48</text>
<text x="301.40" y="309.45" font-size="5.8" fill="#3a3a3a" textLength="31.10" lengthAdjust="spacingAndGlyphs" stroke="#3a3a3a" stroke-width="0.2" transform="rotate(0.05 301.4 309.4)" >Frame Rate</text>
<text x="353.60" y="309.45" font-size="5.8" fill="#3a3a3a" textLength="6.70" lengthAdjust="spacingAndGlyphs" stroke="#3a3a3a" stroke-width="0.2" transform="rotate(0.05 353.6 309.4)" >30</text>
<path d="M286.82,314.32 h2.55 l-1.28,1.62 z" fill="#666"/>
<path d="M293.55,315.25 l1.62,1.97 l3.48,-4.64" fill="none" stroke="#1f8f1f" stroke-width="1.04"/>
<text x="302.10" y="317.08" font-size="5.8" fill="#3a3a3a" textLength="47.00" lengthAdjust="spacingAndGlyphs" stroke="#3a3a3a" stroke-width="0.2" transform="rotate(0.05 302.1 317.1)" >Global Status: Ok</text>
<path d="M301.75,322.88 l1.62,1.97 l3.48,-4.64" fill="none" stroke="#1f8f1f" stroke-width="1.04"/>
<text x="310.00" y="324.71" font-size="5.8" fill="#3a3a3a" textLength="33.00" lengthAdjust="spacingAndGlyphs" stroke="#3a3a3a" stroke-width="0.2" transform="rotate(0.05 310.0 324.7)" >Fixed Frame</text>
<text x="353.60" y="324.71" font-size="5.8" fill="#3a3a3a" textLength="8.10" lengthAdjust="spacingAndGlyphs" stroke="#3a3a3a" stroke-width="0.2" transform="rotate(0.05 353.6 324.7)" >OK</text>
<path d="M287.40,329.00 v2.55 l1.62,-1.28 z" fill="#666"/>
<ellipse cx="296.10" cy="330.28" rx="2.90" ry="1.62" fill="#e8e8e8" stroke="#555" stroke-width="0.52"/>
<circle cx="296.10" cy="330.28" r="1.04" fill="#444"/>
<text x="302.10" y="332.34" font-size="5.8" fill="#2d78c4" textLength="12.00" lengthAdjust="spacingAndGlyphs" font-weight="bold" stroke="#2d78c4" stroke-width="0.2" transform="rotate(0.05 302.1 332.3)" >Grid</text>
<rect x="353.60" y="328.08" width="4.29" height="4.29" fill="#ffffff" stroke="#d2d6dc" stroke-width="0.58"/>
<path d="M354.30,330.16 l1.04,1.39 l2.20,-3.25" fill="none" stroke="#2f70c4" stroke-width="1.04"/>
<path d="M287.40,336.63 v2.55 l1.62,-1.28 z" fill="#666"/>
<line x1="294.01" y1="340.00" x2="295.87" y2="337.68" stroke="#3a58c8" stroke-width="0.696" />
<line x1="295.87" y1="337.68" x2="295.87" y2="335.13" stroke="#c83a3a" stroke-width="0.696" />
<line x1="295.87" y1="337.68" x2="298.65" y2="337.21" stroke="#3aa83a" stroke-width="0.696" />
<text x="302.10" y="339.97" font-size="5.8" fill="#2d78c4" textLength="7.00" lengthAdjust="spacingAndGlyphs" font-weight="bold" stroke="#2d78c4" stroke-width="0.2" transform="rotate(0.05 302.1 340.0)" >TF</text>
<rect x="353.60" y="335.71" width="4.29" height="4.29" fill="#ffffff" stroke="#d2d6dc" stroke-width="0.58"/>
<path d="M354.30,337.79 l1.04,1.39 l2.20,-3.25" fill="none" stroke="#2f70c4" stroke-width="1.04"/>
<path d="M286.82,344.84 h2.55 l-1.28,1.62 z" fill="#666"/>
<path d="M293.08,347.40 q2.78,-6.03 6.03,0" fill="none" stroke="#d8452a" stroke-width="1.04"/>
<text x="302.10" y="347.60" font-size="5.8" fill="#2d78c4" textLength="29.00" lengthAdjust="spacingAndGlyphs" font-weight="bold" stroke="#2d78c4" stroke-width="0.2" transform="rotate(0.05 302.1 347.6)" >Odometry</text>
<rect x="353.60" y="343.34" width="4.29" height="4.29" fill="#ffffff" stroke="#d2d6dc" stroke-width="0.58"/>
<path d="M354.30,345.42 l1.04,1.39 l2.20,-3.25" fill="none" stroke="#2f70c4" stroke-width="1.04"/>
<path d="M295.40,351.89 v2.55 l1.62,-1.28 z" fill="#666"/>
<path d="M301.75,353.40 l1.62,1.97 l3.48,-4.64" fill="none" stroke="#1f8f1f" stroke-width="1.04"/>
<text x="310.00" y="355.23" font-size="5.8" fill="#3a3a3a" textLength="27.80" lengthAdjust="spacingAndGlyphs" stroke="#3a3a3a" stroke-width="0.2" transform="rotate(0.05 310.0 355.2)" >Status: Ok</text>
<path d="M295.40,359.52 v2.55 l1.62,-1.28 z" fill="#666"/>
<text x="301.40" y="362.86" font-size="5.8" fill="#3a3a3a" textLength="13.60" lengthAdjust="spacingAndGlyphs" stroke="#3a3a3a" stroke-width="0.2" transform="rotate(0.05 301.4 362.9)" >Topic</text>
<text x="353.60" y="362.86" font-size="5.8" fill="#3a3a3a" textLength="17.60" lengthAdjust="spacingAndGlyphs" stroke="#3a3a3a" stroke-width="0.2" transform="rotate(0.05 353.6 362.9)" >/odom</text>
<text x="301.40" y="370.49" font-size="5.8" fill="#3a3a3a" textLength="45.60" lengthAdjust="spacingAndGlyphs" stroke="#3a3a3a" stroke-width="0.2" transform="rotate(0.05 301.4 370.5)" >Position Tolera...</text>
<text x="353.60" y="370.49" font-size="5.8" fill="#3a3a3a" textLength="7.00" lengthAdjust="spacingAndGlyphs" stroke="#3a3a3a" stroke-width="0.2" transform="rotate(0.05 353.6 370.5)" >0.1</text>
<text x="301.40" y="378.12" font-size="5.8" fill="#3a3a3a" textLength="43.20" lengthAdjust="spacingAndGlyphs" stroke="#3a3a3a" stroke-width="0.2" transform="rotate(0.05 301.4 378.1)" >Angle Tolerance</text>
<text x="353.60" y="378.12" font-size="5.8" fill="#3a3a3a" textLength="7.00" lengthAdjust="spacingAndGlyphs" stroke="#3a3a3a" stroke-width="0.2" transform="rotate(0.05 353.6 378.1)" >0.1</text>
<text x="301.40" y="385.75" font-size="5.8" fill="#3a3a3a" textLength="13.30" lengthAdjust="spacingAndGlyphs" stroke="#3a3a3a" stroke-width="0.2" transform="rotate(0.05 301.4 385.7)" >Keep</text>
<text x="353.60" y="385.75" font-size="5.8" fill="#3a3a3a" textLength="9.80" lengthAdjust="spacingAndGlyphs" stroke="#3a3a3a" stroke-width="0.2" transform="rotate(0.05 353.6 385.7)" >100</text>
<path d="M295.40,390.04 v2.55 l1.62,-1.28 z" fill="#666"/>
<text x="301.40" y="393.38" font-size="5.8" fill="#3a3a3a" textLength="16.00" lengthAdjust="spacingAndGlyphs" stroke="#3a3a3a" stroke-width="0.2" transform="rotate(0.05 301.4 393.4)" >Shape</text>
<text x="353.60" y="393.38" font-size="5.8" fill="#3a3a3a" textLength="16.20" lengthAdjust="spacingAndGlyphs" stroke="#3a3a3a" stroke-width="0.2" transform="rotate(0.05 353.6 393.4)" >Arrow</text>
<path d="M295.40,397.67 v2.55 l1.62,-1.28 z" fill="#666"/>
<text x="301.40" y="401.01" font-size="5.8" fill="#3a3a3a" textLength="29.00" lengthAdjust="spacingAndGlyphs" stroke="#3a3a3a" stroke-width="0.2" transform="rotate(0.05 301.4 401.0)" >Covariance</text>
<rect x="353.60" y="396.75" width="4.29" height="4.29" fill="#ffffff" stroke="#d2d6dc" stroke-width="0.58"/>
<path d="M354.30,398.83 l1.04,1.39 l2.20,-3.25" fill="none" stroke="#2a2a2a" stroke-width="1.04"/>
<text x="285.80" y="444.16" font-size="5.8" fill="#111" textLength="14.20" lengthAdjust="spacingAndGlyphs" font-weight="bold" stroke="#111" stroke-width="0.2" transform="rotate(0.05 285.8 444.2)" >Keep</text>
<text x="285.80" y="451.06" font-size="5.8" fill="#222" textLength="128.00" lengthAdjust="spacingAndGlyphs" stroke="#222" stroke-width="0.2" transform="rotate(0.05 285.8 451.1)" >Number of arrows to keep before removing the</text>
<text x="285.80" y="457.76" font-size="5.8" fill="#222" textLength="88.50" lengthAdjust="spacingAndGlyphs" stroke="#222" stroke-width="0.2" transform="rotate(0.05 285.8 457.8)" >oldest. 0 means keep all of them.</text>
<text x="300.30" y="477.46" font-size="5.8" fill="#222" text-anchor="middle" stroke="#222" stroke-width="0.2" transform="rotate(0.05 300.3 477.5)" >Add</text>
<text x="334.80" y="477.46" font-size="5.8" fill="#b4b4b4" text-anchor="middle" stroke="#b4b4b4" stroke-width="0.2" transform="rotate(0.05 334.8 477.5)" >Duplicate</text>
<text x="369.10" y="477.46" font-size="5.8" fill="#b4b4b4" text-anchor="middle" stroke="#b4b4b4" stroke-width="0.2" transform="rotate(0.05 369.1 477.5)" >Remove</text>
<text x="403.50" y="477.46" font-size="5.8" fill="#b4b4b4" text-anchor="middle" stroke="#b4b4b4" stroke-width="0.2" transform="rotate(0.05 403.5 477.5)" >Rename</text>
<path d="M427.06,375.29 v2.42 l-1.54,-1.21 z" fill="#555"/>
<path d="M762.96,375.29 v2.42 l-1.54,-1.21 z" fill="#555"/>
</g>
</svg>
</body></html>
